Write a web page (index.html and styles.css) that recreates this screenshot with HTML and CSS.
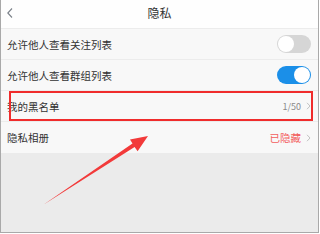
FILE: index.html
```html
<!DOCTYPE html>
<html lang="zh-CN">
<head>
<meta charset="utf-8">
<title>隐私</title>
<link rel="stylesheet" href="styles.css">
</head>
<body>
<div class="frame">
  <header class="bar">
    <svg class="back" width="8" height="12" viewBox="0 0 8 12"><path d="M6 1.5 L1.8 6 L6 10.5" fill="none" stroke="#7a8088" stroke-width="1.1"/></svg>
    <h1 class="title">隐私</h1>
  </header>
  <ul class="list">
    <li class="row">
      <span class="label">允许他人查看关注列表</span>
      <span class="switch"><span class="knob"></span></span>
    </li>
    <li class="row">
      <span class="label">允许他人查看群组列表</span>
      <span class="switch on"><span class="knob"></span></span>
    </li>
    <li class="row">
      <span class="label">我的黑名单</span>
      <span class="value"><span class="count">1/50</span><svg class="chev" width="5" height="8" viewBox="0 0 5 8"><path d="M1 0.8 L4 4 L1 7.2" fill="none" stroke="#c2c2c2" stroke-width="1"/></svg></span>
    </li>
    <li class="row">
      <span class="label">隐私相册</span>
      <span class="value"><span class="hidden">已隐藏</span><svg class="chev" width="5" height="8" viewBox="0 0 5 8"><path d="M1 0.8 L4 4 L1 7.2" fill="none" stroke="#c2c2c2" stroke-width="1"/></svg></span>
    </li>
  </ul>
  <div class="rest"></div>
  <svg class="annot" width="320" height="234" viewBox="0 0 320 234">
    <rect x="10" y="92" width="302" height="28" fill="none" stroke="#f02c2c" stroke-width="2"/>
    <polygon points="43,205 134.6,146.9 137.6,151.2 148,136 130,139.4 132.5,143.6" fill="#f23a3a"/>
  </svg>
</div>
</body>
</html>
```
FILE: styles.css
```css
* { box-sizing: border-box; }
html, body { margin: 0; padding: 0; background: #ffffff; }
body {
  font-family: "Noto Sans CJK SC", "Noto Sans", sans-serif;
  width: 320px;
  height: 234px;
  overflow: hidden;
}
.frame {
  position: relative;
  width: 319px;
  height: 233px;
  border-left: 1px solid #a9a9a9;
  border-right: 1px solid #a9a9a9;
  border-bottom: 1px solid #a9a9a9;
  background: #ebebeb;
  display: flex;
  flex-direction: column;
}
.bar {
  height: 29px;
  background: #fefefe;
  border-bottom: 1px solid #ececec;
  display: flex;
  align-items: center;
  justify-content: center;
  position: relative;
  flex: none;
}
.back {
  position: absolute;
  left: 5px;
  top: 7px;
}
.title {
  margin: 0 0 2px;
  font-size: 12px;
  font-weight: normal;
  color: #333;
  line-height: 1;
}
.list {
  list-style: none;
  margin: 0;
  padding: 0;
  flex: none;
  background: #f8f8f8;
}
.row {
  height: 31px;
  padding: 0 7px 0 6px;
  display: flex;
  align-items: center;
  justify-content: space-between;
  border-bottom: 1px solid #ececec;
  font-size: 10.5px;
  color: #333;
}
.row:last-child { border-bottom: none; }
.switch {
  width: 34px;
  height: 18px;
  border-radius: 9px;
  background: #d6d6d6;
  display: flex;
  align-items: center;
  padding: 1px;
}
.switch .knob {
  width: 16px;
  height: 16px;
  border-radius: 50%;
  background: #fff;
}
.switch.on {
  background: #1b8fe8;
  justify-content: flex-end;
}
.value {
  display: flex;
  align-items: center;
  gap: 5px;
}
.count {
  font-size: 9px;
  color: #8a8a8a;
}
.hidden {
  font-size: 10.5px;
  color: #f35e5e;
}
.chev {
  display: block;
}
.rest {
  flex: 1;
}
.annot {
  position: absolute;
  left: -1px;
  top: 0;
  pointer-events: none;
}
```
